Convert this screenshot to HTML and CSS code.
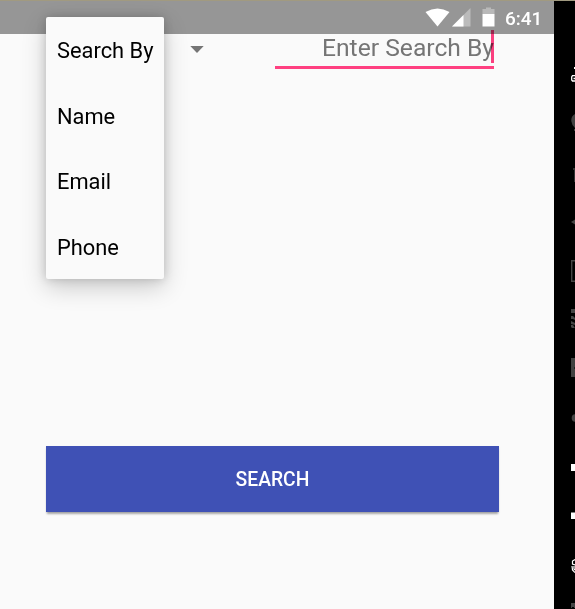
FILE: index.html
```html
<!DOCTYPE html>
<html lang="en">
<head>
<meta charset="utf-8">
<title>Search</title>
<link rel="stylesheet" href="styles.css">
</head>
<body>
<div class="emulator">
  <main class="screen">
    <header class="status-bar">
      <svg class="status-icons" width="72" height="20" viewBox="0 0 72 20">
        <path d="M0.5 4Q12.500 -3 24.500 4L12.500 18.500Z" fill="#fff"/>
        <path d="M45.500 0V18.500H27Z" fill="#bbb"/>
        <path d="M38.500 7V18.500H27Z" fill="#fff"/>
        <path d="M61 -.5H66V1H69.500V6H57.500V1H61Z" fill="#b9b9b9"/>
        <path d="M57.500 6H69.500V18.500H57.500Z" fill="#fff"/>
      </svg>
      <time class="clock">6:41</time>
    </header>
    <section class="form">
      <div class="fields">
        <svg class="caret-down" width="14" height="7" viewBox="0 0 14 7"><path d="M.3 0H13.700L7 7Z" fill="#757575"/></svg>
        <div class="input"><span class="hint">Enter Search By</span><i class="cursor"></i></div>
      </div>
      <button class="search">SEARCH</button>
    </section>
    <ul class="dropdown">
      <li>Search By</li>
      <li>Name</li>
      <li>Email</li>
      <li>Phone</li>
    </ul>
  </main>
  <aside class="toolbar">
    <svg viewBox="0 0 4 49"><path d="M3 18h1v2H3z" fill="#fff"/><path d="M4 26.700H1.500L.7 28V31L1.500 32H4M2.500 29.500H4" fill="none" stroke="#fff" stroke-width="1.300"/></svg>
    <svg viewBox="0 0 4 49"><path d="M4 16Q0 18 .3 23Q.7 27 4 30V16M3 31h1v2H3z" fill="#414141"/></svg>
    <svg viewBox="0 0 4 49"><path d="M2 21h2v2H2zM3 23h1v12H3z" fill="#333"/></svg>
    <svg viewBox="0 0 4 49"><path d="M0 26L4 23.500V28.500Z" fill="#444"/></svg>
    <svg viewBox="0 0 4 49"><path d="M4 15.700H.7V36.300H4" fill="none" stroke="#444" stroke-width="1.400"/></svg>
    <svg viewBox="0 0 4 49"><path d="M0 15h4v4H0zM0 22H2L4 24V26L2 25H0zM0 27L4 29V31L0 30zM0 31H2L4 34H1L0 33z" fill="#444"/></svg>
    <svg viewBox="0 0 4 49"><path d="M0 15H4V24L3 25L4 26V34H0z" fill="#414141"/></svg>
    <svg viewBox="0 0 4 49"><circle cx="4.500" cy="26" r="3.800" fill="#444"/></svg>
    <svg viewBox="0 0 4 49"><path d="M0 23h4v7H0z" fill="#fff"/></svg>
    <svg viewBox="0 0 4 49"><path d="M0 22.500h4v6.500H0z" fill="#fff"/></svg>
    <svg viewBox="0 0 4 49"><path d="M4 20.500L1.500 22V25L4 26M1 27L1.500 31L4 33.500M3 27V30L4 31" fill="none" stroke="#fff" stroke-width="1.200"/></svg>
    <svg viewBox="0 0 4 49"><path d="M0 15h4v5H3v-1H1v1H0z" fill="#444"/></svg>
  </aside>
</div>
</body>
</html>
```

FILE: styles.css
```css
* { box-sizing: border-box; }

body {
  margin: 0;
  overflow: hidden;
  font-family: Roboto, sans-serif;
}

.emulator {
  display: flex;
  width: 575px;
  height: 609px;
  border-top: 1px solid #a19a80;
  background: #000;
  overflow: hidden;
}

.screen {
  position: relative;
  width: 554px;
  height: 608px;
  background: #fafafa;
  overflow: hidden;
}

.status-bar {
  display: flex;
  justify-content: flex-end;
  height: 33px;
  padding: 7px 11px 0 0;
  background: #969696;
  color: #fff;
}

.status-icons { margin-right: 8px; overflow: visible; }

.clock {
  width: 38px;
  font-size: 19px;
  font-weight: 500;
  line-height: 22px;
  white-space: nowrap;
}

.form { padding: 0 55px 0 46px; }

.fields {
  display: flex;
  justify-content: space-between;
  height: 412px;
  padding: 0 5px 0 144px;
}

.caret-down { margin-top: 12px; }

.input {
  position: relative;
  width: 219px;
  height: 35px;
  border-bottom: 3px solid #ff4081;
  text-align: right;
}

.hint {
  display: block;
  color: #757575;
  font-size: 24.650px;
  line-height: 28px;
  white-space: nowrap;
}

.cursor {
  position: absolute;
  top: -4px;
  right: 0;
  width: 3px;
  height: 33px;
  background: #ff4081;
  mix-blend-mode: multiply;
}

.search {
  display: block;
  width: 453px;
  height: 66px;
  padding: 0;
  border: 0;
  background: #3f51b5;
  box-shadow: 0 3px 2px -1px rgba(0, 0, 0, .3), 0 1px 2px rgba(0, 0, 0, .1);
  color: #fff;
  font: 500 19.300px/68px Roboto, sans-serif;
}

.dropdown {
  position: absolute;
  top: 16px;
  left: 46px;
  width: 118px;
  margin: 0;
  padding: 0;
  list-style: none;
  border-radius: 2px;
  background: #fafafa;
  box-shadow: 0 8px 24px rgba(0, 0, 0, .2), 0 0 10px rgba(0, 0, 0, .17);
}

.dropdown li {
  height: 65.600px;
  padding-left: 11px;
  color: #000;
  font-size: 21.850px;
  line-height: 68px;
  white-space: nowrap;
}

.toolbar {
  width: 21px;
  padding: 48px 0 0 17px;
  background: #000;
}

.toolbar svg { display: block; width: 4px; height: 49px; }
```
